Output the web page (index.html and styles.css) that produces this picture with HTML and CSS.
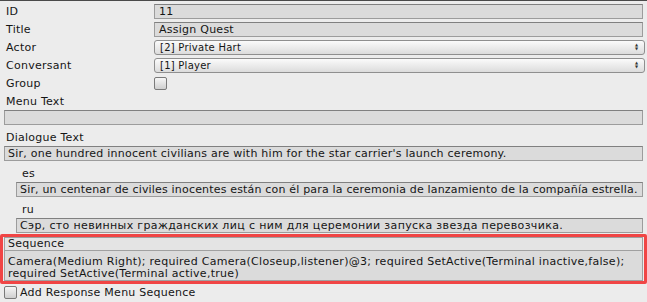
FILE: index.html
```html
<!DOCTYPE html>
<html lang="en">
<head>
    <meta charset="UTF-8">
    <title>Dialogue Entry</title>
    <link rel="stylesheet" href="styles.css">
</head>
<body>
    <div class="inspector">
        <div class="row">
            <label>ID</label>
            <div class="field">11</div>
        </div>
        <div class="row">
            <label>Title</label>
            <div class="field">Assign Quest</div>
        </div>
        <div class="row">
            <label>Actor</label>
            <div class="popup">[2] Private Hart<span class="arrows">&#9650;<br>&#9660;</span></div>
        </div>
        <div class="row">
            <label>Conversant</label>
            <div class="popup">[1] Player<span class="arrows">&#9650;<br>&#9660;</span></div>
        </div>
        <div class="row">
            <label>Group</label>
            <div class="check"></div>
        </div>

        <div class="block first">
            <div class="caption">Menu Text</div>
            <div class="field"></div>
        </div>
        <div class="block">
            <div class="caption">Dialogue Text</div>
            <div class="field">Sir, one hundred innocent civilians are with him for the star carrier's launch ceremony.</div>
        </div>
        <div class="block sub">
            <div class="caption">es</div>
            <div class="field tight">Sir, un centenar de civiles inocentes están con él para la ceremonia de lanzamiento de la compañía estrella.</div>
        </div>
        <div class="block sub">
            <div class="caption">ru</div>
            <div class="field wide">Сэр, сто невинных гражданских лиц с ним для церемонии запуска звезда перевозчика.</div>
        </div>

        <div class="highlight">
            <div class="seq">
                <div class="seq-caption">Sequence</div>
                <div class="field multi">Camera(Medium Right); required Camera(Closeup,listener)@3; required SetActive(Terminal inactive,false);<br>required SetActive(Terminal active,true)</div>
            </div>
        </div>

        <div class="toggle">
            <div class="check"></div>
            <span>Add Response Menu Sequence</span>
        </div>
    </div>
</body>
</html>
```

FILE: styles.css
```css
html, body { margin: 0; padding: 0; }
body { background: #ececec; font-family: "DejaVu Sans", Verdana, sans-serif; font-size: 11px; letter-spacing: 0.25px; color: #151515; width: 647px; height: 302px; overflow: hidden; }
.inspector { border-top: 1px solid #4a4a4a; padding: 1px 4px 0 4px; }
.row { display: grid; grid-template-columns: 150px 1fr; align-items: center; height: 18px; }
.row label { padding-left: 2px; }
.field { background: #dbdbdb; border: 1px solid #9c9c9c; border-top-color: #808080; height: 13px; line-height: 13px; padding: 0 3px; white-space: nowrap; overflow: hidden; }
.field.tight { letter-spacing: 0.18px; }
.field.wide { letter-spacing: 0.35px; }
.row .field { padding: 0 4px; }
.popup { position: relative; height: 13px; line-height: 13px; padding: 0 5px; border: 1px solid #8f8f8f; border-radius: 3px; background: linear-gradient(#fbfbfb, #dcdcdc); font-size: 10px; margin-right: -2px; }
.arrows { position: absolute; right: 6px; top: 2px; font-size: 4px; line-height: 4px; color: #333; letter-spacing: 0; }
.check { width: 11px; height: 11px; border: 1px solid #7a7a7a; border-radius: 2px; background: linear-gradient(#f6f6f6, #cfcfcf); }
.block { padding-top: 4px; }
.block.first { padding-top: 1px; }
.caption { padding-left: 2px; height: 17px; line-height: 17px; }
.block.sub { padding-left: 12px; }
.block.sub .caption { padding-left: 6px; }
.highlight { margin: 1px -4px 0 -4px; border: 3px solid #f04545; border-radius: 2px; padding: 0 1px; }
.seq { border: 1px solid #a0a0a0; background: #e4e4e4; }
.seq-caption { padding-left: 3px; height: 12px; line-height: 12px; border-bottom: 1px solid #a0a0a0; }
.seq .field.multi { border: none; height: auto; line-height: 12px; padding: 5px 3px 0 3px; white-space: normal; letter-spacing: 0.28px; }
.toggle { display: flex; align-items: center; gap: 3px; margin-top: 2px; }
```
